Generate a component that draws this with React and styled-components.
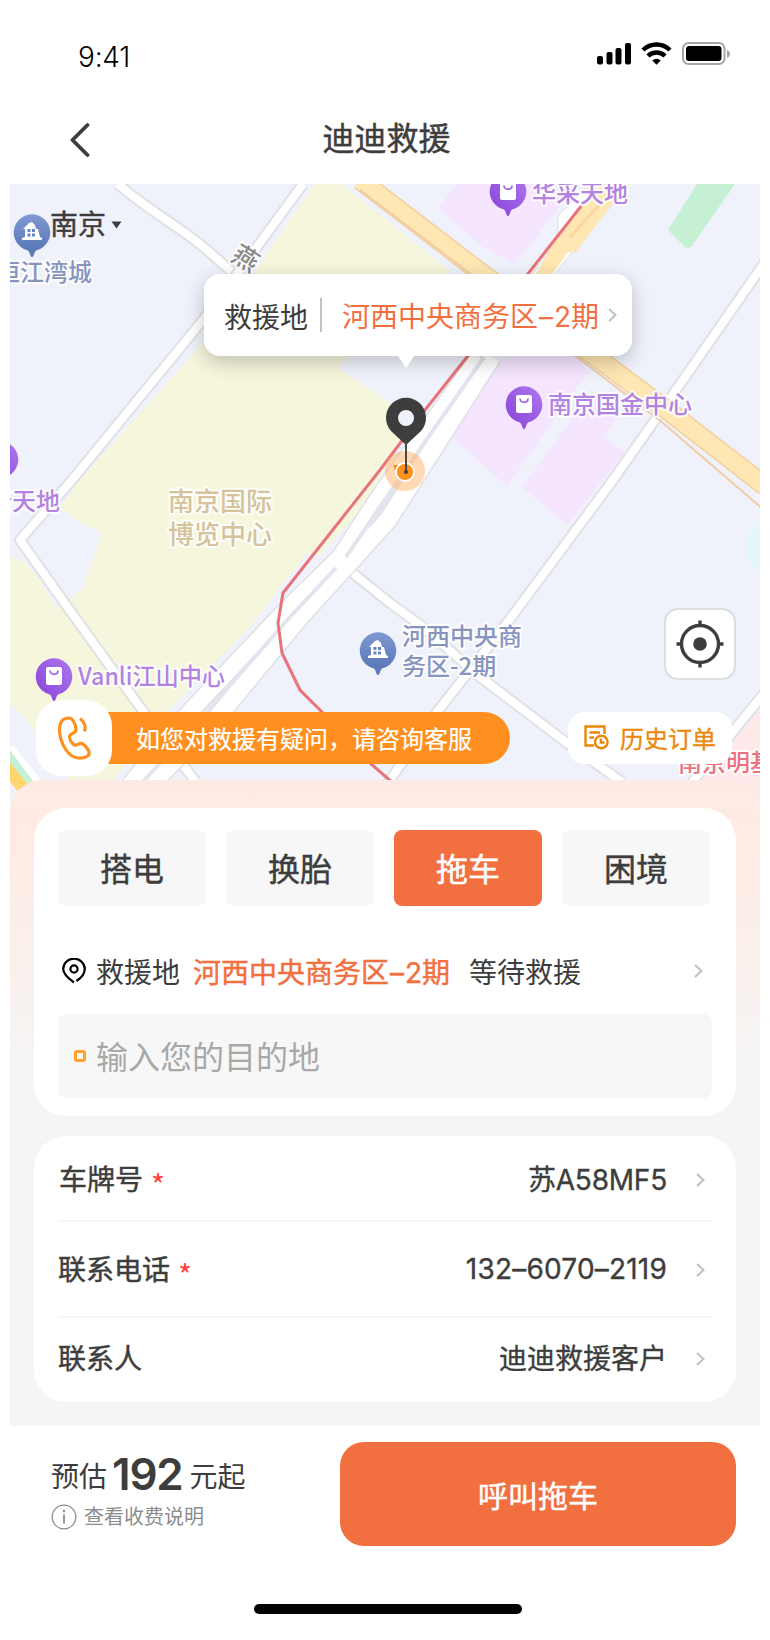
import React from "react";
import styled, { createGlobalStyle, css } from "styled-components";

const INK = "#3d3d3d";
const CORAL = "#f26f40";
const AMBER = "#ff9020";
const FONT = '"Inter", "Noto Sans CJK SC", sans-serif';

const GlobalStyle = createGlobalStyle`
  * { box-sizing: border-box; }
  body { margin: 0; background: #fff; font-family: ${FONT}; color: ${INK}; }
  button { border: 0; padding: 0; font: inherit; color: inherit; background: none; }
`;

/* Noto CJK has no medium cut everywhere, so medium is a regular face with a hairline stroke */
const medium = css`
  -webkit-text-stroke: 0.45px currentColor;
`;

const Screen = styled.main`
  width: 750px;
  height: 1640px;
  margin: 0 auto;
  display: flex;
  flex-direction: column;
  overflow: hidden;
`;
const StatusBar = styled.div`
  height: 96px;
  padding: 42px 28px 0 68px;
  display: flex;
  justify-content: space-between;
  align-items: flex-start;
`;
const Clock = styled.span`
  font-size: 28px;
  font-weight: 300;
  line-height: 30px;
  letter-spacing: -0.2px;
  color: #000;
`;
const NavBar = styled.header`
  height: 88px;
  padding: 0 61px 0 60px;
  display: grid;
  grid-template-columns: 20px 1fr 20px;
  align-items: center;
`;
const Title = styled.h1`
  margin: 0 0 2px;
  padding-left: 4px;
  text-align: center;
  font-size: 32px;
  line-height: 40px;
  font-weight: 400;
  ${medium}
`;
const MapArea = styled.section`
  position: relative;
  flex: none;
  height: 622px;
`;
const MapCanvas = styled.svg`
  display: block;
  font-family: "Noto Sans CJK SC", sans-serif;
`;
const City = styled.button`
  position: absolute;
  left: 40px;
  top: 25px;
  display: flex;
  align-items: center;
  gap: 5px;
  font-size: 28px;
  line-height: 32px;
  ${medium}
`;
const Tooltip = styled.div`
  position: absolute;
  left: 194px;
  top: 90px;
  width: 428px;
  height: 82px;
  padding: 0 15px 0 20px;
  display: flex;
  align-items: center;
  justify-content: space-between;
  border-radius: 16px;
  background: #fff;
  font-size: 28px;
  box-shadow: 0 6px 20px rgba(0, 0, 0, 0.22);
  white-space: nowrap;
  &::after {
    content: "";
    position: absolute;
    left: 194px;
    top: 100%;
    border: 8px solid transparent;
    border-top: 12px solid #fff;
    border-bottom: 0;
  }
`;
const TooltipBody = styled.div`
  display: flex;
  align-items: center;
`;
const TooltipLabel = styled.span`
  padding-top: 2px;
`;
const Rule = styled.i`
  width: 2px;
  height: 34px;
  margin: 0 20px 0 12px;
  background: #c2c2c2;
`;
const Place = styled.span`
  color: ${CORAL};
  ${(p) => p.$strong && medium}
`;
const Dash = styled.span`
  margin: 0 1px;
`;
const LocateButton = styled.button`
  position: absolute;
  left: 654px;
  top: 424px;
  width: 72px;
  height: 72px;
  display: grid;
  place-items: center;
  border: 2px solid #dadfe0;
  border-radius: 14px;
  background: #fff;
`;
const MapActions = styled.div`
  position: absolute;
  left: 26px;
  right: 28px;
  top: 516px;
  display: flex;
  justify-content: space-between;
  align-items: center;
`;
const Support = styled.button`
  display: flex;
  align-items: center;
`;
const SupportIcon = styled.span`
  width: 76px;
  height: 76px;
  display: grid;
  place-items: center;
  border-radius: 26px;
  background: #fff;
  z-index: 1;
`;
const SupportText = styled.span`
  width: 404px;
  height: 52px;
  margin-left: -6px;
  padding-left: 30px;
  border-radius: 0 26px 26px 0;
  background: ${AMBER};
  color: #fff;
  text-align: left;
  font-size: 24px;
  line-height: 56px;
  white-space: nowrap;
  -webkit-text-stroke: 0.2px currentColor;
`;
const History = styled.button`
  width: 164px;
  height: 52px;
  display: flex;
  align-items: center;
  gap: 11px;
  padding: 0 0 2px 16px;
  border-radius: 16px;
  background: #fff;
  color: #eb870b;
  font-size: 24px;
  -webkit-text-stroke: 0.3px currentColor;
`;
const Sheet = styled.section`
  position: relative;
  flex: none;
  height: 646px;
  margin-top: -26px;
  padding: 28px 24px 24px;
  display: flex;
  flex-direction: column;
  gap: 20px;
  border-radius: 32px 32px 0 0;
  background: linear-gradient(#ffe9e4 0, #feebe3 60px, #f5f5f5 290px);
`;
const Card = styled.div`
  border-radius: 32px;
  background: #fff;
  padding: ${(p) => p.$pad};
`;
const Tabs = styled.div`
  display: flex;
  gap: 20px;
`;
const Tab = styled.button`
  width: 148px;
  height: 76px;
  border-radius: 8px;
  padding-bottom: 2px;
  font-size: 32px;
  background: ${(p) => (p.$active ? CORAL : "#f7f7f7")};
  color: ${(p) => (p.$active ? "#fff" : INK)};
  ${medium}
`;
const SpotRow = styled.div`
  height: 108px;
  padding: 22px 9px 0 4px;
  display: flex;
  align-items: center;
  font-size: 28px;
  line-height: 40px;
  white-space: nowrap;
`;
const SpotText = styled.div`
  flex: 1;
  display: flex;
  padding-top: 3px;
`;
const SpotLabel = styled.span`
  margin: 0 13px 0 10px;
`;
const SpotState = styled.span`
  margin-left: 19px;
`;
const Destination = styled.div`
  height: 84px;
  padding: 0 16px;
  display: flex;
  align-items: center;
  gap: 10px;
  border-radius: 8px;
  background: #f7f7f7;
  color: #a8a8a8;
  font-size: 32px;
`;
const Placeholder = styled.span`
  margin-bottom: 2px;
`;
const Marker = styled.i`
  width: 12px;
  height: 12px;
  border: 3px solid #ff9f33;
  border-radius: 3px;
`;
const Field = styled.div`
  height: ${(p) => p.$height}px;
  padding: ${(p) => p.$shift};
  display: flex;
  align-items: center;
  font-size: 28px;
  line-height: 40px;
  border-bottom: ${(p) => (p.$last ? 0 : 2)}px solid #f6f6f6;
`;
const FieldLabel = styled.span`
  flex: 1;
  display: flex;
  ${medium}
`;
const Star = styled.span`
  margin: 0 0 -4px 8px;
  padding-top: 4px;
  color: #ff4141;
  font-size: 30px;
  font-family: "Noto Sans CJK SC", sans-serif;
  -webkit-text-stroke: 0;
`;
const FieldValue = styled.span`
  margin-right: 29px;
  padding-bottom: ${(p) => p.$lift || 0}px;
  letter-spacing: ${(p) => p.$tracking || 0}px;
  -webkit-text-stroke: 0.35px currentColor;
`;
const Footer = styled.footer`
  height: 136px;
  padding: 16px 24px 0 41px;
  display: flex;
  justify-content: space-between;
`;
const Estimate = styled.div`
  padding-top: 9px;
`;
const Price = styled.div`
  display: flex;
  align-items: center;
  font-size: 28px;
  line-height: 46px;
`;
const Amount = styled.strong`
  margin: 0 7px 6px 5px;
  font-size: 44px;
  font-weight: 600;
  letter-spacing: -1.2px;
`;
const Notes = styled.div`
  display: flex;
  align-items: center;
  gap: 7px;
  color: #8c8c8c;
  font-size: 20px;
  line-height: 28px;
`;
const CallButton = styled.button`
  width: 396px;
  height: 104px;
  border-radius: 24px;
  background: ${CORAL};
  color: #fff;
  font-size: 30px;
  ${medium}
`;
const HomeBar = styled.div`
  width: 268px;
  height: 10px;
  margin: 42px 0 0 244px;
  border-radius: 5px;
  background: #000;
`;

const Chevron = () => (
  <svg width="9" height="14" viewBox="0 0 9 14" fill="none" stroke="#c0c0c0" strokeWidth="2">
    <path d="M1 1l6.5 6L1 13" />
  </svg>
);

const StatusIcons = () => (
  <svg width="135" height="24" viewBox="0 0 135 24">
    <rect x="0" y="14" width="6" height="8.5" rx="2" />
    <rect x="9.5" y="10" width="6" height="12.5" rx="2" />
    <rect x="18.5" y="6" width="6" height="16.5" rx="2" />
    <rect x="28" y="1" width="6" height="21.5" rx="2" />
    <g fill="none" stroke="#000" strokeWidth="4.5">
      <path d="M46 8a19.5 19.5 0 0 1 27 0" />
      <path d="M51 14a12 12 0 0 1 17 0" />
    </g>
    <path d="M55.3 18.4a6 6 0 0 1 8.4 0L59.5 22.7z" />
    <rect x="86" y="1" width="41.5" height="21" rx="5.5" fill="none" stroke="#a6a6a6" strokeWidth="2" />
    <rect x="89" y="4" width="35.5" height="15" rx="3" />
    <path d="M130 8c4 1.5 4 6.5 0 8z" fill="#a6a6a6" />
  </svg>
);

const Poi = ({ x, y, kind }) => (
  <g transform={`translate(${x} ${y})`}>
    <path
      d="M0 25c-2 0-1.5-4-4-6.5A18.3 18.3 0 1 1 4 18.5C1.5 21 2 25 0 25z"
      fill={kind === "mall" ? "url(#mall)" : "url(#home)"}
    />
    {kind === "mall" ? (
      <>
        <rect x="-8" y="-9" width="16" height="18" rx="2" fill="#fff" />
        <path d="M-4-5.500c0 5 8 5 8 0" fill="none" stroke="#a268e4" strokeWidth="1.8" />
      </>
    ) : (
      <>
        <path d="M-7 5V-3h-2L-3-9l3-1 3 3 1 4h2l2 8 2 1v2H-10V6z" fill="#fff" />
        <path d="M-4.500-3h3v3h-3zm4.500 0h3v3H0zm-4.500 4.500h3v3h-3zm4.500 0h3v3H0z" fill="#6583c1" />
      </>
    )}
  </g>
);

const Road = ({ d, w = 8 }) => (
  <>
    <path d={d} stroke="#e0e1e5" strokeWidth={w + 4} />
    <path d={d} stroke="#fff" strokeWidth={w} />
  </>
);

const Label = ({ x, y, fill, size = 24, children, ...rest }) => (
  <text
    x={x}
    y={y}
    fontSize={size}
    fill={fill}
    stroke="#fff"
    strokeOpacity="0.85"
    strokeWidth="4"
    strokeLinejoin="round"
    paintOrder="stroke"
    fontWeight="500"
    {...rest}
  >
    {children}
  </text>
);

const CityMap = () => (
  <MapCanvas width="750" height="622" viewBox="10 184 750 622">
    <defs>
      <linearGradient id="mall" x1="0" y1="1" x2="1" y2="0">
        <stop offset="0.2" stopColor="#8f4cdc" />
        <stop offset="1" stopColor="#ae78ee" />
      </linearGradient>
      <linearGradient id="home" x1="0" y1="1" x2="0" y2="0">
        <stop offset="0.2" stopColor="#5b7ab8" />
        <stop offset="1" stopColor="#8098d2" />
      </linearGradient>
    </defs>
    <rect x="10" y="184" width="750" height="622" fill="#eff2fa" />
    <path
      fill="#f6f6dd"
      d="M315 184H342L380 215 450 271 385 310 348 357 338 367 392 405 400 440 370 500 320 555 307 553 250 627 167 712 113 780 70 780 37 733 10 702V560L13 557 25 562 40 580 57 609 68 600 83 588 102 533 80 523 60 508 80 480 203 343 253 275 287 223z"
    />
    <path
      fill="#f5e5ff"
      d="M457 184L438 208 483 247 515 264 557 210 575 184zM503 357H577L588 372 507 486 452 437zM593 391L620 413 603 437 625 452 567 525 522 487z"
    />
    <path fill="#c5f0d4" d="M697 184L668 230 686 248 691 247 735 184z" />
    <path fill="#e2f7fc" d="M760 522L748 533V560L760 571z" />
    <path fill="#ffe8ea" d="M760 708L695 790V806H760z" />
    <g fill="none" strokeLinejoin="round">
      <Road d="M118 184C150 212 185 230 207 250L232 272" />
      <Road d="M303 184L257 247 203 320 72 480 20 540 66 605 107 662 143 711 195 781" />
      <Road d="M765 262L683 380 613 480 507 623 437 712 388 783" />
      <Road d="M340 563L390 603 423 627 480 677 567 743 622 782" />
      <Road d="M765 692L690 785" />
      <path d="M10 748L48 796" stroke="#fff" strokeWidth="9" />
      <path d="M0 752L42 808" stroke="#c5f0d4" strokeWidth="18" />
      <path d="M0 760L36 804" stroke="#ffd66b" strokeWidth="12" />
      <path d="M479 357L377 500 340 557 283 613 182 720 130 785" stroke="#dfe1e6" strokeWidth="19" />
      <path d="M492 357L388 520 352 560 300 617 215 720 150 785" stroke="#dfe1e6" strokeWidth="20" />
      <path d="M479 357L377 500 340 557 283 613 182 720 130 785" stroke="#fff" strokeWidth="16" />
      <path d="M492 357L388 520 352 560 300 617 215 720 150 785" stroke="#fff" strokeWidth="17" />
      <path d="M484 357L382 504 346 557M336 568L290 617 195 725 140 785" stroke="#e2e5ed" strokeWidth="4" />
      <path d="M360 180L480 272 596 357 667 410 765 486" stroke="#f3cf9f" strokeWidth="20" />
      <path d="M360 180L480 272 596 357 667 410 765 486" stroke="#ffe7b3" strokeWidth="17" />
      <path d="M360 190L476 278 577 357 663 423 765 511" stroke="#f2cca6" strokeWidth="2" />
    </g>
    <path fill="#fff" stroke="#dddfe4" d="M585 188L558 216V238L525 285 548 283 572 252 612 205z" />
    <path fill="#ffe7b3" d="M583 205L603 184H630L613 203 576 252H568L545 284H530L555 240z" />
    <path d="M601 203L570 237" stroke="#fcd6a0" strokeWidth="3" />
    <path
      fill="none"
      stroke="#e8747b"
      strokeWidth="3"
      d="M582 205L527 275 467 357 425 410 380 470 283 593 278 623 282 653 300 690 322 712 370 763 394 784"
    />
    <Poi x={32} y={232} kind="home" />
    <Poi x={378} y={650} kind="home" />
    <Poi x={508} y={191} kind="mall" />
    <Poi x={524} y={404} kind="mall" />
    <Poi x={0} y={459} kind="mall" />
    <Poi x={54} y={676} kind="mall" />
    <Label x={-4} y={281} fill="#8795be">恒江湾城</Label>
    <Label x={532} y={202} fill="#b283e0">华采天地</Label>
    <Label x={548} y={413} fill="#b283e0">南京国金中心</Label>
    <Label x={-12} y={510} fill="#b283e0">新天地</Label>
    <Label x={78} y={685} fill="#b283e0" textLength="147" lengthAdjust="spacingAndGlyphs">Vanli江山中心</Label>
    <Label x={168} y={511} size={26} fill="#d5c39c">南京国际</Label>
    <Label x={168} y={544} size={26} fill="#d5c39c">博览中心</Label>
    <Label x={402} y={645} fill="#8795be">河西中央商</Label>
    <Label x={402} y={675} fill="#8795be">务区-2期</Label>
    <Label x={678} y={771} fill="#e8737f">南京明基</Label>
    <Label x={-13} y={10} size={26} fill="#8b8b8b" transform="translate(246 258) rotate(32)">燕</Label>

    <circle cx="405" cy="471" r="20" fill="#ffb468" fillOpacity="0.5" />
    <path d="M393 465h6l-4 6z" fill={AMBER} />
    <circle cx="405" cy="472" r="9" fill={AMBER} stroke="#fff" strokeWidth="1.8" />
    <path
      fill={INK}
      fillRule="evenodd"
      d="M406 445l-15-14a20 20 0 1 1 30 0zM406 410a8 8 0 1 0 0 16a8 8 0 1 0 0-16z"
    />
    <path d="M406 440V472" stroke="#4a4a44" strokeWidth="2" />
    <circle cx="406" cy="472" r="2" fill={INK} />
  </MapCanvas>
);

const PlaceName = ({ strong }) => (
  <Place $strong={strong}>
    河西中央商务区<Dash>–</Dash>2期
  </Place>
);

const tabs = ["搭电", "换胎", "拖车", "困境"];
const fields = [
  { label: "车牌号", value: "苏A58MF5", required: true, height: 86, shift: "4px 7px 0 1px", tracking: -0.2 },
  { label: "联系电话", value: "132–6070–2119", required: true, height: 96, shift: "2px 7px 0 0", tracking: 0.2, lift: 2 },
  { label: "联系人", value: "迪迪救援客户", height: 84, shift: "0 7px 2px 0" },
];

export default function App() {
  return (
    <Screen>
      <GlobalStyle />
      <StatusBar>
        <Clock>9:41</Clock>
        <StatusIcons />
      </StatusBar>
      <NavBar>
        <svg width="20" height="36" viewBox="0 0 20 36" fill="none" stroke={INK} strokeWidth="3.8" strokeLinecap="round" strokeLinejoin="round">
          <path d="M17.5 3L2.5 18 17.5 33" />
        </svg>
        <Title>迪迪救援</Title>
      </NavBar>

      <MapArea>
        <CityMap />
        <City>
          南京
          <svg width="11" height="8" viewBox="0 0 11 8" fill={INK}>
            <path d="M.5.5h10L5.5 7.5z" />
          </svg>
        </City>
        <Tooltip>
          <TooltipBody>
            <TooltipLabel>救援地</TooltipLabel>
            <Rule />
            <PlaceName />
          </TooltipBody>
          <Chevron />
        </Tooltip>
        <LocateButton>
          <svg width="48" height="48" viewBox="0 0 48 48" fill="none" stroke={INK} strokeWidth="3.4">
            <circle cx="24" cy="24" r="18.5" />
            <circle cx="24" cy="24" r="6.8" fill={INK} stroke="none" />
            <path d="M24 0.500V7M24 41v6.500M0.500 24H7M41 24h6.500" />
          </svg>
        </LocateButton>
        <MapActions>
          <Support>
            <SupportIcon>
              <svg width="36" height="44" viewBox="0 0 36 44" fill="none" stroke={AMBER} strokeWidth="3.2" strokeLinejoin="round">
                <path d="M13 2C6 2 3 7 3.500 15C4.500 28 12 41 22 42C29 42.500 34 40 33 36C32.500 33.500 29 29 26 27.500C23 26.500 21 30 18.500 29C16 28 13 23 13.500 20C14 17 20 18 20 14C20 9 17 2 13 2Z" />
                <path d="M24 2.500C28.500 6 30 11 28.500 15.500" />
              </svg>
            </SupportIcon>
            <SupportText>如您对救援有疑问，请咨询客服</SupportText>
          </Support>
          <History>
            <svg width="25" height="25" viewBox="0 0 25 25" fill="none" stroke="currentColor" strokeWidth="2.4">
              <path d="M10 20.500H1.500V1.500H20.500V9M5.500 7.500H16M5.500 12.500H10" />
              <circle cx="17.3" cy="17" r="6.3" />
              <path d="M16.800 13.500V17.500H20.500" />
            </svg>
            历史订单
          </History>
        </MapActions>
      </MapArea>

      <Sheet>
        <Card $pad="22px 24px 18px">
          <Tabs>
            {tabs.map((t) => (
              <Tab key={t} $active={t === "拖车"}>{t}</Tab>
            ))}
          </Tabs>
          <SpotRow>
            <svg width="24" height="26" viewBox="0 0 24 26" fill="none" stroke="#000" strokeWidth="2.2">
              <path d="M12 24.500C5 19.500 1.200 15.500 1.200 11a10.800 10.300 0 0 1 21.600 0C22.800 15.500 19 20 14.500 23" />
              <circle cx="12" cy="11" r="3.6" />
            </svg>
            <SpotText>
              <SpotLabel>救援地</SpotLabel>
              <PlaceName strong />
              <SpotState>等待救援</SpotState>
            </SpotText>
            <Chevron />
          </SpotRow>
          <Destination>
            <Marker />
            <Placeholder>输入您的目的地</Placeholder>
          </Destination>
        </Card>
        <Card $pad="0 24px">
          {fields.map((f, i) => (
            <Field key={f.label} $height={f.height} $shift={f.shift} $last={i === 2}>
              <FieldLabel>
                {f.label}
                {f.required && <Star>*</Star>}
              </FieldLabel>
              <FieldValue $tracking={f.tracking} $lift={f.lift}>{f.value}</FieldValue>
              <Chevron />
            </Field>
          ))}
        </Card>
      </Sheet>

      <Footer>
        <Estimate>
          <Price>
            预估<Amount>192</Amount>元起
          </Price>
          <Notes>
            <svg width="26" height="26" viewBox="0 0 26 26" fill="none" stroke="#8c8c8c" strokeWidth="1.3">
              <circle cx="13" cy="13" r="11.8" />
              <path d="M13 10.500V19.500" strokeWidth="1.8" />
              <circle cx="13" cy="7" r="1.2" fill="#8c8c8c" stroke="none" />
            </svg>
            查看收费说明
          </Notes>
        </Estimate>
        <CallButton>呼叫拖车</CallButton>
      </Footer>
      <HomeBar />
    </Screen>
  );
}
